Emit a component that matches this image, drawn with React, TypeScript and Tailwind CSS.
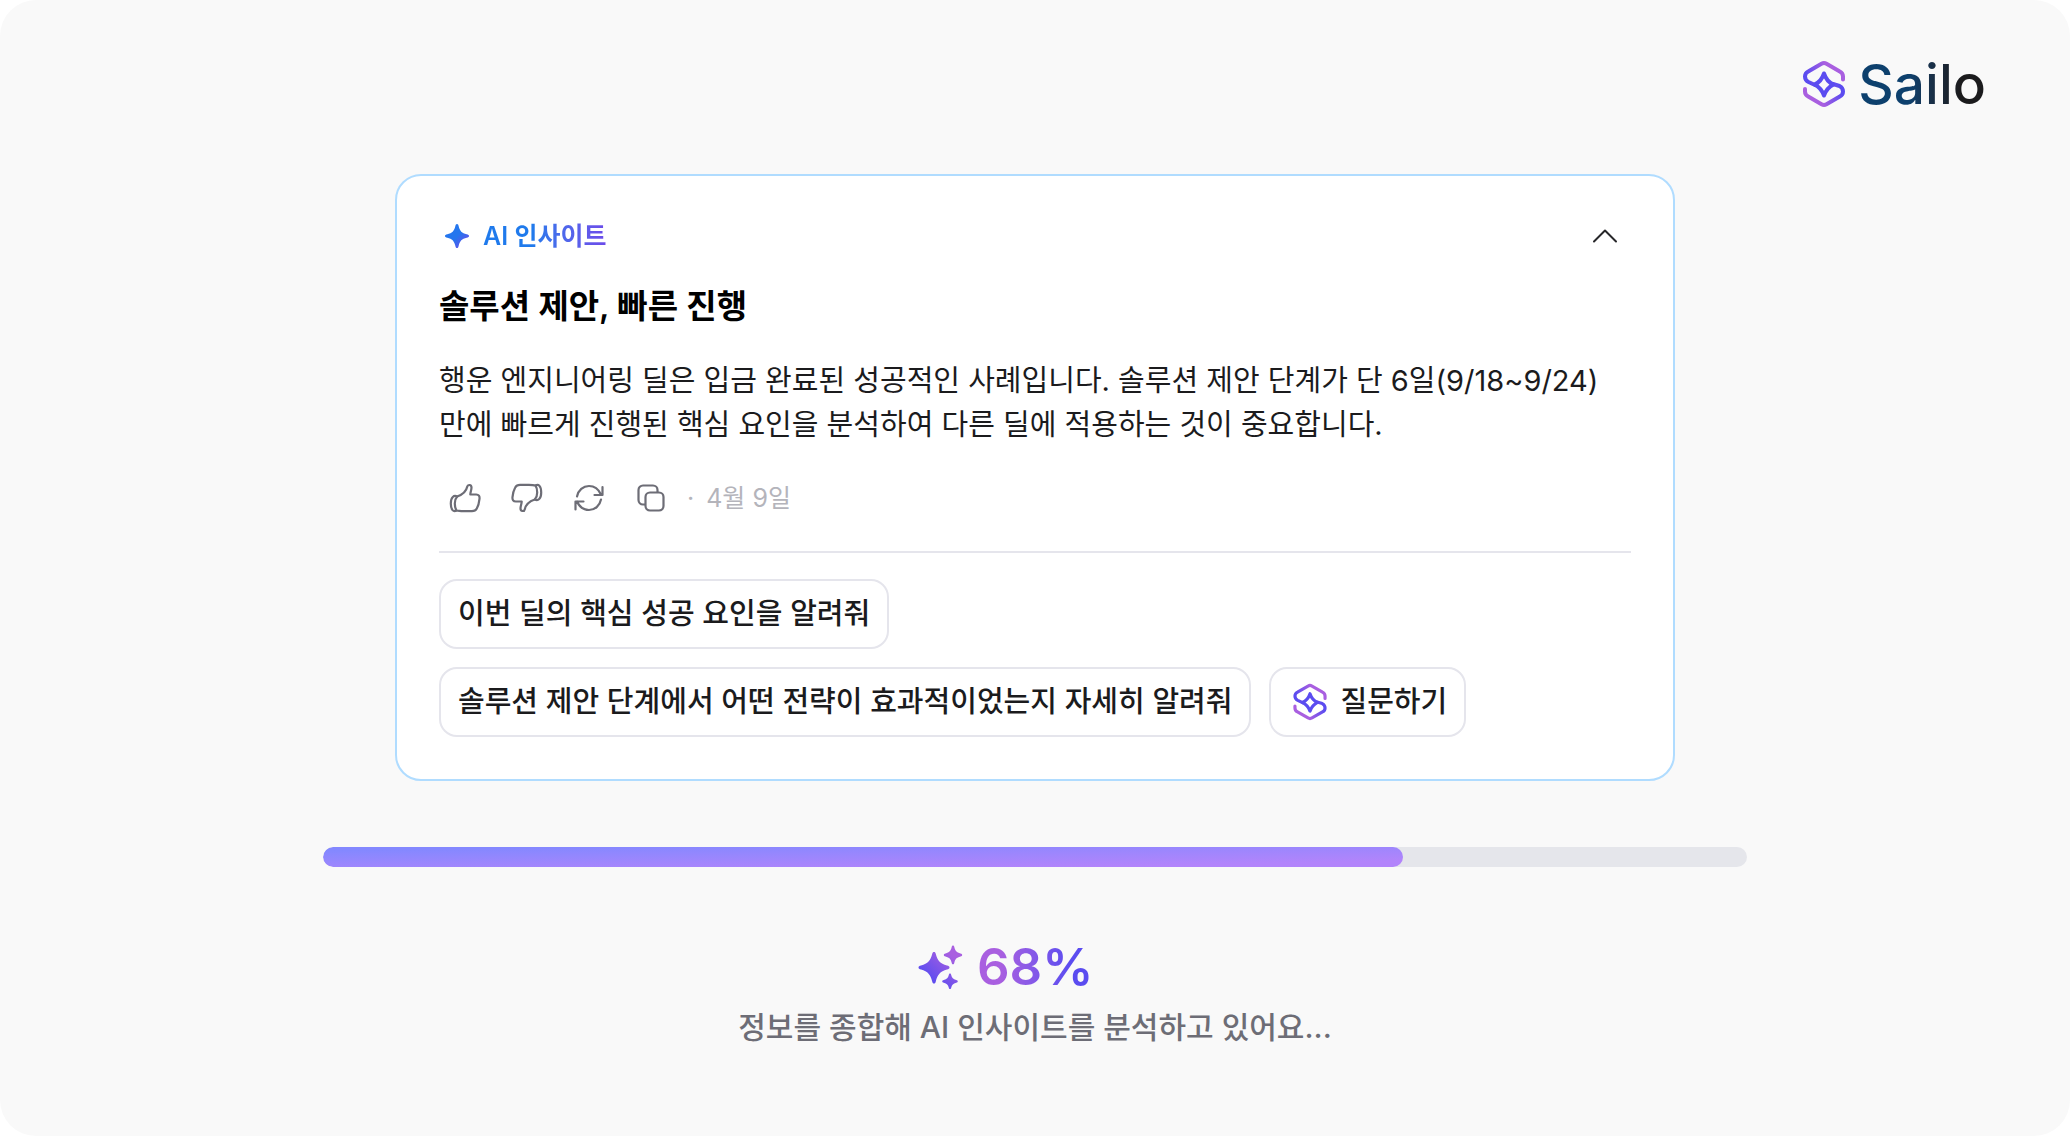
import React, { useState } from 'react';

const PROGRESS = 1080 / 1424;

const suggestions = [
  '이번 딜의 핵심 성공 요인을 알려줘',
  '솔루션 제안 단계에서 어떤 전략이 효과적이었는지 자세히 알려줘',
];

function SailoMark({ id, className }: { id: string; className: string }) {
  return (
    <svg viewBox="0 0 44 48" fill="none" className={className} aria-hidden="true">
      <defs>
        <linearGradient id={`${id}-top`} x1="6" y1="20" x2="40" y2="8" gradientUnits="userSpaceOnUse">
          <stop stopColor="#5b4cf0" />
          <stop offset="0.6" stopColor="#a95fe0" />
        </linearGradient>
        <linearGradient id={`${id}-bottom`} x1="38" y1="28" x2="4" y2="40" gradientUnits="userSpaceOnUse">
          <stop stopColor="#5b4cf0" />
          <stop offset="0.6" stopColor="#a95fe0" />
        </linearGradient>
      </defs>
      <g strokeWidth="4" strokeLinecap="round" strokeLinejoin="round">
        <path d="M41 19.500V16.500c0-2.200-1.200-4-3.200-5L24.500 3.800c-1.600-.9-3.400-.9-5 0L6.200 11.500c-2 1-3.200 2.800-3.200 5 0 2.400 1.200 4.300 3.500 5.500l6.500 3" stroke={`url(#${id}-top)`} />
        <path d="M3 29v2.500c0 2.200 1.200 4 3.200 5l13.300 7.700c1.600.9 3.400.9 5 0l13.300-7.700c2-1 3.200-2.800 3.200-5 0-2.400-1.200-4.300-3.500-5.500L31 24" stroke={`url(#${id}-bottom)`} />
        <path d="M22 13.500C24 19.500 26.500 22.500 31.500 24.500 26.500 27 24 30 22 35.500 20 30 17.500 27 12.500 24.500 17.500 22.500 20 19.500 22 13.500Z" stroke="#5b4cf0" />
      </g>
    </svg>
  );
}

function ThumbUp() {
  return (
    <svg viewBox="0 0 32 32" fill="none" stroke="currentColor" strokeWidth="2.200" strokeLinecap="round" strokeLinejoin="round" className="size-8">
      <path d="M8.200 14.500C5 12.800 1.800 15 1.800 21.500s2.700 8.800 5.700 7C6.200 26.500 5.800 24.500 5.800 21.500c0-3 .7-5.200 2.400-7Z" />
      <path d="M8.200 14.500c4.300-1.500 8.800-4 10-9.700.5-2.600 4.300-2.400 4.300.8 0 2.600-1.200 4.600-1.200 6.900h5.900c2.500 0 3.600 1.700 3.300 4.300-.4 4-1.300 7.200-2.700 9.700-1 1.900-2.500 2.700-4.800 2.700H14c-2.500 0-4-.5-6.500-.7" />
    </svg>
  );
}

function Refresh() {
  return (
    <svg viewBox="0 0 32 32" fill="none" stroke="currentColor" strokeWidth="2.200" strokeLinecap="round" strokeLinejoin="round" className="size-8">
      <path d="M4 14.500C5.200 8.200 10.200 4 16 4c5 0 9.500 3 12 8.500M29.500 5v8H21.500" />
      <path d="M28 17.500C26.800 23.800 21.800 28 16 28c-5 0-9.500-3-12-8.500M2.500 27.500v-8h8" />
    </svg>
  );
}

function Copy() {
  return (
    <svg viewBox="0 0 32 32" fill="none" stroke="currentColor" strokeWidth="2.200" strokeLinejoin="round" className="size-8">
      <path d="M10.500 22.500H8A4.500 4.500 0 0 1 3.500 18V8A4.500 4.500 0 0 1 8 3.500h10A4.500 4.500 0 0 1 22.500 8v2.500" />
      <rect x="10.500" y="10.500" width="18" height="18" rx="4.500" />
    </svg>
  );
}

export default function App() {
  const [open, setOpen] = useState(true);

  return (
    <div className="min-h-screen bg-white font-['Inter','Noto_Sans_CJK_KR',sans-serif]">
      <main className="min-h-screen rounded-[36px] bg-[#f9f9f9] px-20 pt-[56px]">
        <header className="flex h-[56px] items-center justify-end gap-3 pr-1">
          <SailoMark id="brand" className="h-12 w-11" />
          <h1 className="bg-linear-to-r from-[#0d406d] from-40% to-[#1b1b1d] to-80% bg-clip-text text-[55px] leading-[56px] font-medium text-transparent">
            Sailo
          </h1>
        </header>

        <section className="mx-auto mt-[62px] max-w-[1280px] rounded-[26px] border-2 border-[#b0dcff] bg-white px-[42px] pt-10 pb-[42px]">
          <div className="flex h-10 items-center justify-between">
            <h2 className="flex items-center gap-3 pl-1">
              <svg viewBox="0 0 28 28" className="size-7" aria-hidden="true">
                <defs>
                  <linearGradient id="insight-star" x1="0" y1="0" x2="1" y2="1">
                    <stop offset="0.5" stopColor="#2476ee" />
                    <stop offset="0.9" stopColor="#6b4bea" />
                  </linearGradient>
                </defs>
                <path d="M14 2c1 0 1.300.7 1.700 2.300 1.100 4.800 3.200 6.900 8 8 1.600.4 2.300.7 2.300 1.700s-.7 1.300-2.300 1.700c-4.800 1.100-6.900 3.200-8 8C15.300 25.300 15 26 14 26s-1.300-.7-1.700-2.300c-1.100-4.800-3.200-6.900-8-8C2.700 15.300 2 15 2 14s.7-1.300 2.300-1.700c4.800-1.100 6.900-3.200 8-8C12.700 2.700 13 2 14 2Z" fill="url(#insight-star)" />
              </svg>
              <span className="bg-linear-to-r from-[#1f7aec] from-40% to-[#6b4bea] bg-clip-text text-[25px] leading-10 font-semibold text-transparent">
                AI 인사이트
              </span>
            </h2>
            <button type="button" aria-label="접기" aria-expanded={open} onClick={() => setOpen(!open)} className="mr-2 p-1">
              <svg viewBox="0 0 28 28" fill="none" stroke="#27272a" strokeWidth="2" strokeLinecap="round" strokeLinejoin="round" className="size-7">
                <path d="M3 19.500 14 8.500 25 19.500" />
              </svg>
            </button>
          </div>

          {open && (
            <>
              <h3 className="mt-[30px] text-[33px] leading-10 font-semibold text-black">솔루션 제안, 빠른 진행</h3>
              <p className="mt-[33px] text-[29px] leading-11 text-[#1b1b1d]">
                행운 엔지니어링 딜은 입금 완료된 성공적인 사례입니다. 솔루션 제안 단계가 단 6일(9/18~9/24)
                <br />
                만에 빠르게 진행된 핵심 요인을 분석하여 다른 딜에 적용하는 것이 중요합니다.
              </p>

              <div className="mt-[31px] flex h-10 items-center gap-5 pl-2.5 text-[#6d6d76]">
                <div className="flex gap-[30px]">
                  <button type="button" aria-label="좋아요"><ThumbUp /></button>
                  <button type="button" aria-label="싫어요"><span className="block rotate-180"><ThumbUp /></span></button>
                  <button type="button" aria-label="다시 생성"><Refresh /></button>
                  <button type="button" aria-label="복사"><Copy /></button>
                </div>
                <p className="flex gap-3 text-[25px] leading-10 text-[#b4b4bb]">
                  <span>·</span>
                  <time dateTime="04-09">4월 9일</time>
                </p>
              </div>

              <hr className="mt-[33px] border-t-2 border-[#e5e5ec]" />

              <div className="mt-[26px] flex flex-wrap gap-[18px] text-[29px] font-medium text-[#1b1b1d]">
                {suggestions.map((text) => (
                  <button key={text} type="button" className="h-[70px] rounded-[18px] border-2 border-[#e5e5ec] px-[17px]">
                    {text}
                  </button>
                ))}
                <button type="button" className="flex h-[70px] items-center gap-3 rounded-[18px] border-2 border-[#e5e5ec] pr-[17px] pl-[21px]">
                  <SailoMark id="ask" className="h-[38px] w-9" />
                  질문하기
                </button>
              </div>
            </>
          )}
        </section>

        <div
          role="progressbar"
          aria-label="분석 진행률"
          aria-valuenow={68}
          className="mx-auto mt-[66px] h-5 max-w-[1424px] overflow-hidden rounded-full bg-[#e5e6eb]"
        >
          <div
            className="h-full rounded-full bg-linear-to-br from-[#8488ff] from-10% to-[#b284fb] to-85%"
            style={{ width: `${PROGRESS * 100}%` }}
          />
        </div>

        <div className="mx-auto mt-[70px] flex h-[60px] w-[236px] items-center gap-[14px]">
          <svg viewBox="0 0 46 46" className="size-[46px]" aria-hidden="true">
            <defs>
              <linearGradient id="sparkles" x1="40" y1="4" x2="12" y2="36" gradientUnits="userSpaceOnUse">
                <stop offset="0.2" stopColor="#a95fe0" />
                <stop offset="1" stopColor="#5b4cf0" />
              </linearGradient>
            </defs>
            <g fill="url(#sparkles)">
              <path d="M17 8c1 0 1.400.6 1.800 2C20.500 16.500 23 19.500 30 21.500c1.600.4 2.500.9 2.500 2s-.9 1.600-2.500 2C23 27.500 20.500 30.500 18.800 37.500c-.4 1.400-.8 2-1.800 2s-1.400-.6-1.800-2C13.500 30.500 11 27.500 4 25.500c-1.600-.4-2.500-.9-2.500-2s.9-1.600 2.500-2C11 19.500 13.500 16.500 15.200 10c.4-1.400.8-2 1.800-2Z" />
              <path d="M36 1.500c.8 0 1 .5 1.300 1.500 1 4 2.200 5.300 6.200 6.400 1.100.3 1.700.7 1.700 1.500s-.6 1.200-1.700 1.500c-4 1.100-5.200 2.400-6.200 6.400-.3 1-.5 1.500-1.300 1.500s-1-.5-1.300-1.500c-1-4-2.200-5.300-6.200-6.400-1.100-.3-1.700-.7-1.700-1.500s.6-1.200 1.700-1.500c4-1.100 5.200-2.400 6.200-6.400.3-1 .5-1.500 1.300-1.500Z" />
              <path d="M33 29.500c.7 0 .9.4 1.200 1.400.8 3 1.900 4.200 5 5 1.100.3 1.600.6 1.600 1.400s-.5 1.100-1.600 1.400c-3.100.8-4.200 2-5 5-.3 1-.5 1.400-1.200 1.400s-.9-.4-1.200-1.400c-.8-3-1.900-4.200-5-5-1.100-.3-1.600-.6-1.600-1.400s.5-1.100 1.600-1.400c3.100-.8 4.200-2 5-5 .3-1 .5-1.400 1.200-1.400Z" />
            </g>
          </svg>
          <strong className="bg-linear-to-r from-[#a95fe0] from-20% to-[#5b4cf0] to-80% bg-clip-text text-[51px] leading-[60px] font-semibold text-transparent">
            68%
          </strong>
        </div>
        <p className="mt-2 text-center text-[30px] leading-11 font-medium text-[#6d6d76]">
          정보를 종합해 AI 인사이트를 분석하고 있어요...
        </p>
      </main>
    </div>
  );
}
